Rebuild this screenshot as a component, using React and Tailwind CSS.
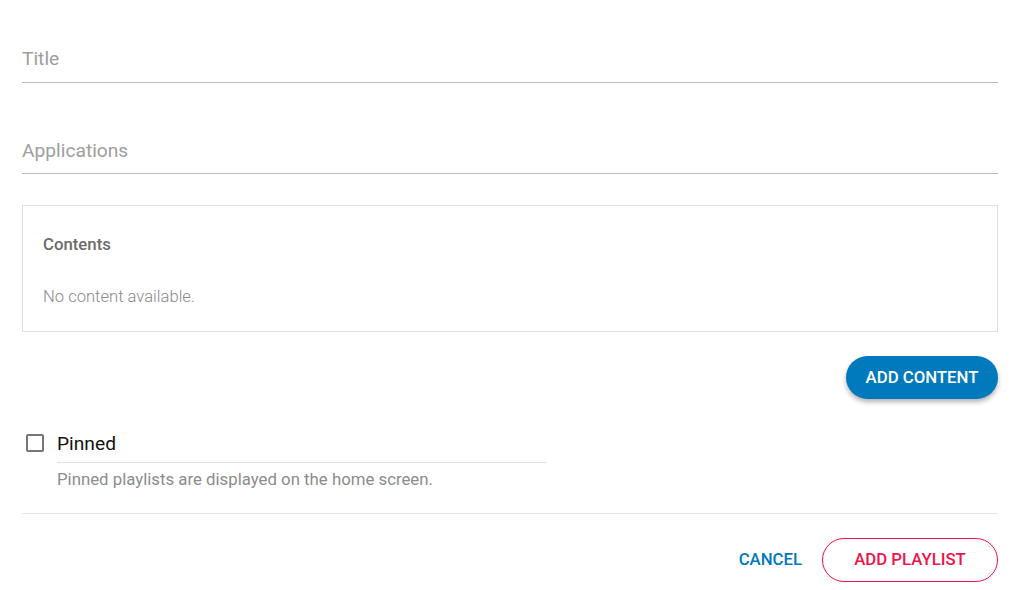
import React, { useState } from 'react';

const App = () => {
  const [pinned, setPinned] = useState(false);

  return (
    <div className="w-[1021px] h-[590px] bg-white overflow-hidden font-['Roboto',sans-serif]">
      <div className="mx-[22px] w-[976px]">
        {/* Title field */}
        <div className="pt-[47px]">
          <div className="text-[19.2px] leading-6 text-[#9e9e9e] pb-[11px] border-b border-[#bdbdbd]">Title</div>
        </div>

        {/* Applications field */}
        <div className="pt-[56px]">
          <div className="text-[19.2px] leading-6 text-[#9e9e9e] pb-[10px] border-b border-[#bdbdbd]">Applications</div>
        </div>

        {/* Contents box */}
        <div className="mt-[31px] border border-[#e0e0e0] h-[127px] px-[20px] pt-[28px]">
          <div className="text-[16.75px] leading-5 font-medium text-[#6b6b6b]">Contents</div>
          <div className="mt-[33px] text-[16.6px] leading-5 font-light text-[#8a8a8a]">No content available.</div>
        </div>

        <div className="flex justify-end mt-[24px]">
          <button className="h-[43px] w-[152px] rounded-full bg-[#0079bd] text-white text-[16.75px] font-medium shadow-[0_3px_5px_rgba(0,0,0,0.3)]">
            ADD CONTENT
          </button>
        </div>

        {/* Pinned */}
        <div className="mt-[27px] flex items-start">
          <button
            onClick={() => setPinned(!pinned)}
            className="mt-[8px] ml-[4px] w-[18px] h-[18px] rounded-[2px] border-2 border-[#757575] bg-white"
          />
          <div className="ml-[13px] w-[489px]">
            <div className="text-[19.2px] leading-6 text-[#111] pt-[6px] pb-[6px] border-b border-[#e0e0e0]">Pinned</div>
            <div className="mt-[6px] text-[16.8px] leading-5 text-[#8c8c8c]">Pinned playlists are displayed on the home screen.</div>
          </div>
        </div>

        <div className="mt-[24px] border-t border-[#e6e6e6]" />

        <div className="flex justify-end items-center mt-[24px] gap-[20px]">
          <button className="text-[16.75px] font-medium text-[#0079bd]">CANCEL</button>
          <button className="h-[44px] w-[176px] rounded-full border border-[#f0124a] text-[#f0124a] text-[16.75px] font-medium">
            ADD PLAYLIST
          </button>
        </div>
      </div>
    </div>
  );
};

export default App;
